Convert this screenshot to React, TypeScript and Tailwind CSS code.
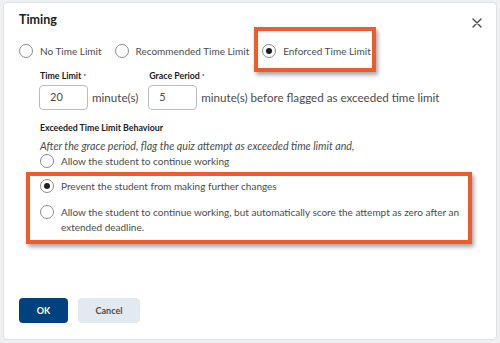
const Radio = ({ checked = false }: { checked?: boolean }) => (
  <span className="flex h-[14px] w-[14px] shrink-0 items-center justify-center rounded-full border border-[#8a8f94] bg-white">
    {checked && <span className="h-[6px] w-[6px] rounded-full bg-[#202122]" />}
  </span>
);

const Option = ({ label, checked }: { label: string; checked?: boolean }) => (
  <label className="flex h-[14px] items-center gap-[7px] leading-[14px]">
    <Radio checked={checked} />
    <span>{label}</span>
  </label>
);

export default function App() {
  return (
    <div
      className="h-[343px] w-[500px] bg-[#eef0f2] px-[3px] pt-[2px] text-[10px] text-[#494c4e]"
      style={{ fontFamily: 'Lato, "Liberation Sans", sans-serif' }}
    >
      <div className="relative flex h-[338px] flex-col rounded-[4px] border border-[#dde1e4] bg-white pl-[15px] pr-[14px]">
        {/* header */}
        <div className="flex items-center justify-between pt-[9px] leading-[16px]">
          <h1 className="text-[12.5px] font-bold text-[#202122]">Timing</h1>
          <svg width="10" height="10" viewBox="0 0 10 10" className="mt-[5px]">
            <path d="M1 1 L9 9 M9 1 L1 9" stroke="#494c4e" strokeWidth="1.4" strokeLinecap="round" />
          </svg>
        </div>

        {/* time limit type */}
        <div className="mt-[16px] flex items-center gap-[13px]">
          <Option label="No Time Limit" />
          <Option label="Recommended Time Limit" />
          <Option label="Enforced Time Limit" checked />
        </div>

        {/* limits */}
        <div className="ml-[20px] mt-[12px] flex gap-[10px]">
          <div className="flex flex-col">
            <span className="ml-[1px] text-[8.8px] font-bold leading-[12px] text-[#202122]">
              Time Limit <span className="align-top text-[6px]">*</span>
            </span>
            <div className="mt-[3px] flex items-center gap-[4px]">
              <div className="flex h-[25px] w-[49px] items-center rounded-[4px] border border-[#b5bdc2] pl-[10px] text-[11px]">20</div>
              <span className="text-[11.6px]">minute(s)</span>
            </div>
          </div>
          <div className="flex flex-col">
            <span className="ml-[1px] text-[8.8px] font-bold leading-[12px] text-[#202122]">
              Grace Period <span className="align-top text-[6px]">*</span>
            </span>
            <div className="mt-[3px] flex items-center gap-[4px]">
              <div className="flex h-[25px] w-[49px] items-center rounded-[4px] border border-[#b5bdc2] pl-[10px] text-[11px]">5</div>
              <span className="text-[11.6px]">minute(s) before flagged as exceeded time limit</span>
            </div>
          </div>
        </div>

        {/* behaviour */}
        <div className="ml-[21px] mt-[12px]">
          <div className="text-[8.8px] font-bold leading-[12px] text-[#202122]">Exceeded Time Limit Behaviour</div>
          <div className="mt-[5px] text-[10.7px] italic leading-[14px]">After the grace period, flag the quiz attempt as exceeded time limit and,</div>
          <div className="mt-[1px]">
            <Option label="Allow the student to continue working" />
          </div>
          <div className="mt-[11px]">
            <Option label="Prevent the student from making further changes" checked />
          </div>
          <label className="mt-[12px] flex items-start gap-[7px] leading-[15px]">
            <Radio />
            <span className="-mt-[0.5px]">
              Allow the student to continue working, but automatically score the attempt as zero after an
              <br />
              extended deadline.
            </span>
          </label>
        </div>

        {/* footer */}
        <div className="mt-auto flex gap-[10px] pb-[16px]">
          <button className="h-[25px] w-[49px] rounded-[4px] bg-[#00427f] text-[9px] font-bold text-white">OK</button>
          <button className="h-[25px] w-[62px] rounded-[4px] bg-[#e3e9f1] text-[9px] font-bold text-[#494c4e]">Cancel</button>
        </div>

        {/* annotation boxes */}
        <div className="pointer-events-none absolute left-[250px] top-[24px] h-[45px] w-[122px] border-[4px] border-[#f15a29] shadow-[2px_3px_4px_rgba(0,0,0,0.35)]" />
        <div className="pointer-events-none absolute left-[22px] top-[169px] h-[72px] w-[446px] border-[4px] border-[#f15a29] shadow-[2px_3px_4px_rgba(0,0,0,0.35)]" />
      </div>
    </div>
  );
}
